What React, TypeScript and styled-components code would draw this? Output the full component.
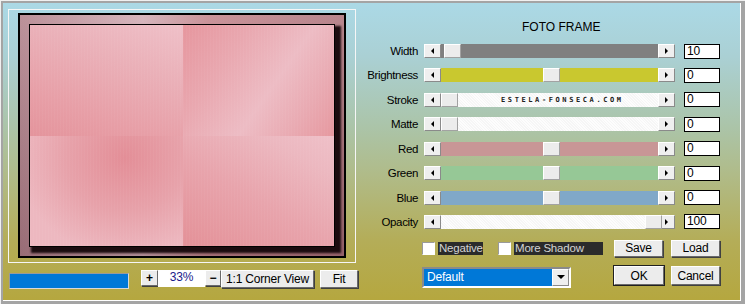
import React from 'react';
import styled, { createGlobalStyle } from 'styled-components';

const GlobalStyle = createGlobalStyle`
    html, body {
        margin: 0;
        padding: 0;
        background: #a8a8a8;
    }
    * {
        box-sizing: border-box;
    }
`

const FONT = `"Liberation Sans", Arial, sans-serif`

const Frame = styled.div`
    width: 745px;
    height: 304px;
    display: flex;
    padding: 2px 4px 3px 2px;
    background: #a4a4a4;
    border-top: 1px solid #f0f0f0;
    border-left: 1px solid #f0f0f0;
    font-family: ${FONT};
    font-size: 11px;
    letter-spacing: -0.2px;
    color: #000;
`
const Panel = styled.div`
    flex: 1;
    display: flex;
    border-right: 1px solid #fff;
    border-bottom: 1px solid #fff;
    background: linear-gradient(180deg, #abd9e6 0%, #aad0d4 18%, #abc4a8 42%, #b0bb88 58%, #b4ad58 80%, #b5a73f 100%);
`
const LeftCol = styled.div`
    width: 356px;
    padding: 6px 0 0 5px;
    display: flex;
    flex-direction: column;
`
const PreviewWell = styled.div`
    width: 348px;
    height: 254px;
    border: 1px solid #f6f6f6;
    padding: 3px 9px;
`
const PhotoFrame = styled.div`
    width: 328px;
    height: 245px;
    border: 2px solid #000;
    padding: 9px;
    background:
        linear-gradient(180deg, rgba(255,255,255,0.1), rgba(40,10,20,0.2)),
        linear-gradient(90deg, #b4858e 0%, #d2aeb6 38%, #c4888f 58%, #b07880 100%);
`
const Photo = styled.div`
    width: 306px;
    height: 223px;
    border: 1px solid #000;
    display: grid;
    grid-template-columns: 153px 1fr;
    grid-template-rows: 111px 1fr;
    box-shadow: 4px 4px 2px 2px rgba(20, 6, 10, 0.95);
`
const Quad = styled.div<{ $bg: string }>`
    background:
        repeating-linear-gradient(90deg, rgba(255,255,255,0.035) 0 1px, rgba(0,0,0,0) 1px 3px),
        ${p => p.$bg};
`
const ZoomBar = styled.div`
    display: flex;
    align-items: flex-start;
    margin-top: 7px;
`
const Progress = styled.div`
    width: 120px;
    height: 16px;
    margin: 3px 0 0 1px;
    background: #0078d7;
    border: 1px solid #d8d8d8;
    border-top-color: #9a9a9a;
    border-left-color: #9a9a9a;
`
const Spacer = styled.div<{ $w: number }>`
    width: ${p => p.$w}px;
    flex: none;
`
const RaisedButton = styled.div<{ $w: number; $h?: number }>`
    width: ${p => p.$w}px;
    height: ${p => p.$h ?? 18}px;
    flex: none;
    display: flex;
    align-items: center;
    justify-content: center;
    background: #ececec;
    border: 1px solid #fff;
    border-right-color: #6a6a6a;
    border-bottom-color: #6a6a6a;
    box-shadow: 1px 1px 0 #404040;
    font-size: 12px;
    line-height: 1;
    white-space: nowrap;
`
const DefaultButton = styled(RaisedButton)`
    outline: 1px solid #202020;
`
const PlusMinus = styled(RaisedButton)`
    font-weight: bold;
    font-size: 12px;
`
const ZoomField = styled.div`
    width: 47px;
    height: 17px;
    flex: none;
    background: #fff;
    color: #1a1a8a;
    text-align: center;
    font-size: 12px;
    line-height: 15px;
`
const RightCol = styled.div`
    flex: 1;
    padding-left: 2px;
    display: flex;
    flex-direction: column;
`
const Title = styled.div`
    height: 41px;
    padding-top: 17px;
    padding-left: 161px;
    font-size: 12px;
    letter-spacing: 0;
`
const SliderList = styled.div`
    display: grid;
    grid-template-columns: 57px 254px 36px;
    column-gap: 6px;
    row-gap: 10.43px;
    grid-auto-rows: 14px;
    align-items: center;
`
const Label = styled.div`
    text-align: right;
    font-size: 11.5px;
    line-height: 14px;
    letter-spacing: -0.35px;
    white-space: nowrap;
`
const SliderBox = styled.div`
    display: flex;
    height: 14px;
    margin-right: 3px;
`
const ArrowBtn = styled.div`
    width: 17px;
    height: 14px;
    flex: none;
    background: #efefef;
    border: 1px solid #fff;
    border-right-color: #8a8a8a;
    border-bottom-color: #8a8a8a;
    display: flex;
    align-items: center;
    justify-content: center;
`
const Tri = styled.span<{ $dir: 'left' | 'right' | 'down' }>`
    width: 0;
    height: 0;
    border-style: solid;
    border-color: transparent;
    ${p => p.$dir === 'left' && 'border-width: 3px 3px 3px 0; border-right-color: #000;'}
    ${p => p.$dir === 'right' && 'border-width: 3px 0 3px 3px; border-left-color: #000;'}
    ${p => p.$dir === 'down' && 'border-width: 4px 4px 0 4px; border-top-color: #000;'}
`
const Track = styled.div<{ $bg: string; $hatch?: boolean }>`
    position: relative;
    flex: 1;
    background: ${p => p.$hatch
        ? `repeating-linear-gradient(45deg, #f6f6f6 0 1px, #fdfdfd 1px 2px)`
        : p.$bg};
`
const Thumb = styled.div`
    position: absolute;
    top: 0;
    width: 17px;
    height: 14px;
    background: #ececec;
    border: 1px solid #fff;
    border-right-color: #a2a2a2;
    border-bottom-color: #a2a2a2;
`
const Watermark = styled.div`
    position: absolute;
    left: 60px;
    top: 3px;
    font-family: "DejaVu Sans Mono", monospace;
    font-size: 7px;
    font-weight: bold;
    letter-spacing: 2.6px;
    line-height: 8px;
    color: #202020;
`
const ValueBox = styled.div`
    height: 15px;
    background: #fff;
    border: 1px solid #000;
    padding-left: 2px;
    font-size: 12px;
    line-height: 13px;
`
const Bottom = styled.div`
    display: flex;
    margin-top: 11px;
    padding-left: 61px;
`
const Controls = styled.div`
    width: 192px;
    display: flex;
    flex-direction: column;
`
const CheckRow = styled.div`
    display: flex;
    margin-top: 2px;
    height: 13px;
`
const Check = styled.label`
    display: flex;
    align-items: center;
    margin-right: 15px;
`
const Box = styled.span`
    width: 13px;
    height: 13px;
    background: #fff;
    border: 1px solid #fff;
    border-top-color: #9a9a9a;
    border-left-color: #9a9a9a;
    margin-right: 3px;
`
const CheckText = styled.span<{ $w: number }>`
    width: ${p => p.$w}px;
    height: 13px;
    background: #2b2b2b;
    color: #d4d4d4;
    font-size: 11.5px;
    line-height: 13px;
    padding-left: 1px;
    white-space: nowrap;
`
const Select = styled.div`
    margin-top: 12px;
    width: 149px;
    height: 21px;
    display: flex;
    border: 2px solid #fff;
    border-top-color: #8a8a8a;
    border-left-color: #8a8a8a;
    background: #fff;
`
const SelectValue = styled.div`
    flex: 1;
    background: #0078d7;
    color: #fff;
    font-size: 12px;
    line-height: 17px;
    padding-left: 3px;
`
const SelectArrow = styled(ArrowBtn)`
    height: 17px;
`
const ButtonGrid = styled.div`
    display: grid;
    grid-template-columns: 49px 49px;
    column-gap: 8px;
    row-gap: 7px;
`

type Row = {
    label: string
    color: string
    hatch?: boolean
    pos: number
    value: string
    mark?: boolean
}

const rows: Row[] = [
    { label: 'Width', color: '#808080', pos: 3, value: '10' },
    { label: 'Brightness', color: '#c9c82f', pos: 102, value: '0' },
    { label: 'Stroke', color: '#fafafa', hatch: true, pos: 0, value: '0', mark: true },
    { label: 'Matte', color: '#fafafa', hatch: true, pos: 0, value: '0' },
    { label: 'Red', color: '#c89696', pos: 102, value: '0' },
    { label: 'Green', color: '#96c896', pos: 102, value: '0' },
    { label: 'Blue', color: '#80a8c8', pos: 102, value: '0' },
    { label: 'Opacity', color: '#fafafa', hatch: true, pos: 204, value: '100' },
]

const quads = [
    'linear-gradient(200deg, #efc0c8 0%, #eab0b8 35%, #e79ea6 75%, #e4949c 100%)',
    'linear-gradient(125deg, #e6969e 0%, #e9a8b0 30%, #edbcc4 58%, #e9aab2 80%, #e6989f 100%)',
    'radial-gradient(ellipse 70% 90% at 62% 20%, #e38e97 0%, #e7a2aa 55%, #edb8c0 100%)',
    'linear-gradient(30deg, #e4939a 5%, #e8a4ac 45%, #ecb8c0 80%, #efc0c8 100%)',
]

export default function App(): JSX.Element {
    return (
        <>
            <GlobalStyle />
            <Frame>
                <Panel>
                    <LeftCol>
                        <PreviewWell>
                            <PhotoFrame>
                                <Photo>
                                    {quads.map((q, i) => <Quad key={i} $bg={q} />)}
                                </Photo>
                            </PhotoFrame>
                        </PreviewWell>
                        <ZoomBar>
                            <Progress />
                            <Spacer $w={12} />
                            <PlusMinus $w={17} $h={16}>+</PlusMinus>
                            <ZoomField>33%</ZoomField>
                            <PlusMinus $w={16} $h={16}>−</PlusMinus>
                            <RaisedButton $w={93} $h={18}>1:1 Corner View</RaisedButton>
                            <Spacer $w={6} />
                            <RaisedButton $w={38} $h={18}>Fit</RaisedButton>
                        </ZoomBar>
                    </LeftCol>
                    <RightCol>
                        <Title>FOTO FRAME</Title>
                        <SliderList>
                            {rows.map(r => (
                                <React.Fragment key={r.label}>
                                    <Label>{r.label}</Label>
                                    <SliderBox>
                                        <ArrowBtn><Tri $dir="left" /></ArrowBtn>
                                        <Track $bg={r.color} $hatch={r.hatch}>
                                            {r.mark && <Watermark>ESTELA-FONSECA.COM</Watermark>}
                                            <Thumb style={{ left: r.pos }} />
                                        </Track>
                                        <ArrowBtn><Tri $dir="right" /></ArrowBtn>
                                    </SliderBox>
                                    <ValueBox>{r.value}</ValueBox>
                                </React.Fragment>
                            ))}
                        </SliderList>
                        <Bottom>
                            <Controls>
                                <CheckRow>
                                    <Check><Box /><CheckText $w={45}>Negative</CheckText></Check>
                                    <Check><Box /><CheckText $w={89}>More Shadow</CheckText></Check>
                                </CheckRow>
                                <Select>
                                    <SelectValue>Default</SelectValue>
                                    <SelectArrow><Tri $dir="down" /></SelectArrow>
                                </Select>
                            </Controls>
                            <ButtonGrid>
                                <RaisedButton $w={49} $h={17}>Save</RaisedButton>
                                <RaisedButton $w={49} $h={17}>Load</RaisedButton>
                                <DefaultButton $w={50} $h={19}>OK</DefaultButton>
                                <RaisedButton $w={49} $h={19}>Cancel</RaisedButton>
                            </ButtonGrid>
                        </Bottom>
                    </RightCol>
                </Panel>
            </Frame>
        </>
    );
}
